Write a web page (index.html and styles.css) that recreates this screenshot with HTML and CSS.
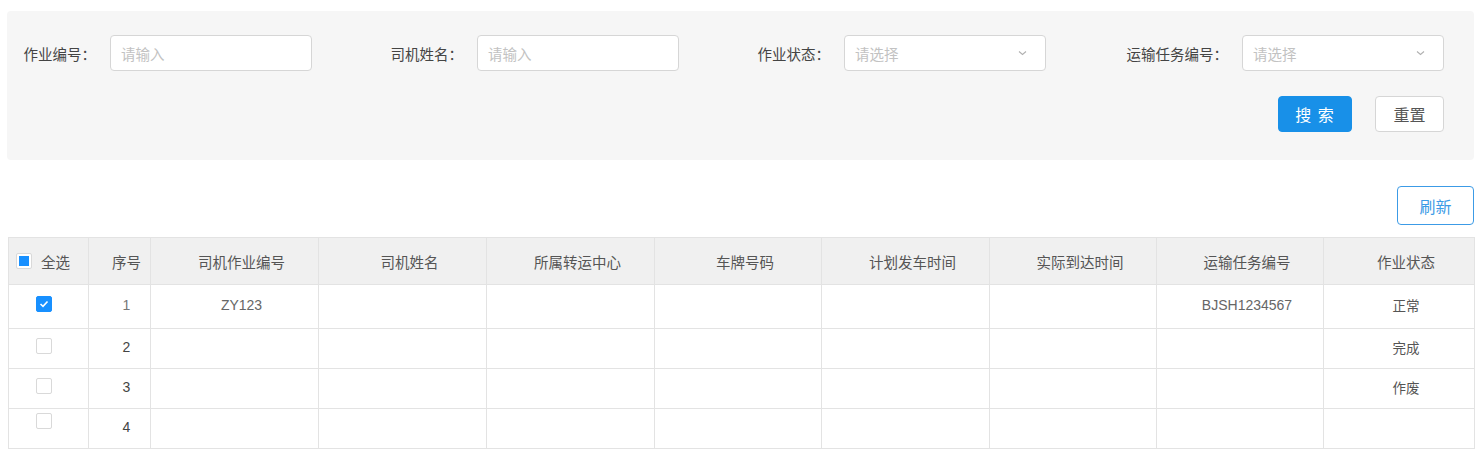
FILE: index.html
```html
<!DOCTYPE html>
<html lang="zh-CN">
<head>
<meta charset="utf-8">
<title>作业管理</title>
<link rel="stylesheet" href="styles.css">
</head>
<body>
<div class="page">
  <section class="filter">
    <div class="filter-grid">
      <div class="field"><span class="label">作业编号：</span><div class="input"><span class="ph">请输入</span></div></div>
      <div class="field"><span class="label">司机姓名：</span><div class="input"><span class="ph">请输入</span></div></div>
      <div class="field"><span class="label">作业状态：</span><div class="input select"><span class="ph">请选择</span><svg class="arrow" width="9" height="6" viewBox="0 0 9 6"><path d="M1 1.5 L4.5 4.5 L8 1.5" fill="none" stroke="#b0b0b0" stroke-width="1.1"/></svg></div></div>
      <div class="field"><span class="label">运输任务编号：</span><div class="input select"><span class="ph">请选择</span><svg class="arrow" width="9" height="6" viewBox="0 0 9 6"><path d="M1 1.5 L4.5 4.5 L8 1.5" fill="none" stroke="#b0b0b0" stroke-width="1.1"/></svg></div></div>
    </div>
    <div class="actions">
      <button class="btn primary">搜 索</button>
      <button class="btn plain">重置</button>
    </div>
  </section>

  <div class="toolbar">
    <button class="btn outline">刷新</button>
  </div>

  <table class="grid">
    <colgroup>
      <col class="c-check"><col class="c-no"><col class="c-w168"><col class="c-w168"><col class="c-w168"><col class="c-w167"><col class="c-w168"><col class="c-w167"><col class="c-w167"><col class="c-w151">
    </colgroup>
    <thead>
      <tr>
        <th class="th-check"><span class="cb cb-partial"></span><span class="all">全选</span></th>
        <th>序号</th>
        <th>司机作业编号</th>
        <th>司机姓名</th>
        <th>所属转运中心</th>
        <th>车牌号码</th>
        <th>计划发车时间</th>
        <th>实际到达时间</th>
        <th>运输任务编号</th>
        <th>作业状态</th>
      </tr>
    </thead>
    <tbody>
      <tr class="r1">
        <td class="td-check"><span class="cb cb-on"><svg width="10" height="8" viewBox="0 0 10 8"><path d="M1.5 4 L4 6.3 L8.5 1.5" fill="none" stroke="#fff" stroke-width="1.6"/></svg></span></td>
        <td class="num light">1</td>
        <td>ZY123</td>
        <td></td><td></td><td></td><td></td><td></td>
        <td>BJSH1234567</td>
        <td class="status">正常</td>
      </tr>
      <tr class="r2">
        <td class="td-check"><span class="cb"></span></td>
        <td class="num">2</td>
        <td></td><td></td><td></td><td></td><td></td><td></td><td></td>
        <td class="status">完成</td>
      </tr>
      <tr class="r3">
        <td class="td-check"><span class="cb"></span></td>
        <td class="num">3</td>
        <td></td><td></td><td></td><td></td><td></td><td></td><td></td>
        <td class="status">作废</td>
      </tr>
      <tr class="r4">
        <td class="td-check top"><span class="cb"></span></td>
        <td class="num">4</td>
        <td></td><td></td><td></td><td></td><td></td><td></td><td></td>
        <td class="status"></td>
      </tr>
    </tbody>
  </table>
</div>
</body>
</html>
```

FILE: styles.css
```css
* { box-sizing: border-box; }

html, body {
  margin: 0;
  padding: 0;
  background: #ffffff;
}

body {
  font-family: "Liberation Sans", "Noto Sans CJK SC", sans-serif;
  font-size: 14px;
  color: #333;
}

.page {
  padding: 11px 10px 0 7px;
}

/* ---------- filter panel ---------- */
.filter {
  background: #f6f6f6;
  border-radius: 4px;
  padding: 24px 30px 28px 16px;
}

.filter-grid {
  display: grid;
  grid-template-columns: 289px 367px 367px 398px;
}

.field {
  display: flex;
  align-items: center;
  justify-content: flex-end;
}

.label {
  color: #444;
  font-size: 14.5px;
  margin-right: 14px;
  white-space: nowrap;
}

.input {
  width: 202px;
  height: 36px;
  background: #fff;
  border: 1px solid #d6d6d6;
  border-radius: 4px;
  padding: 0 10px;
  display: flex;
  align-items: center;
  justify-content: space-between;
}

.ph {
  color: #c2c2c2;
  font-size: 14.5px;
}

.arrow {
  margin-right: 8px;
}

.actions {
  display: flex;
  justify-content: flex-end;
  gap: 23px;
  margin-top: 25px;
}

/* ---------- buttons ---------- */
.btn {
  height: 36px;
  border-radius: 4px;
  font-family: "Liberation Sans", "Noto Sans CJK SC", sans-serif;
  font-size: 16px;
  cursor: pointer;
  padding: 0;
}

.primary {
  width: 74px;
  background: #1890e8;
  border: 1px solid #1890e8;
  color: #fff;
  letter-spacing: 1px;
}

.plain {
  width: 69px;
  background: #fff;
  border: 1px solid #d6d6d6;
  color: #555;
}

.toolbar {
  display: flex;
  justify-content: flex-end;
  padding: 26px 0 12px;
}

.outline {
  width: 77px;
  height: 39px;
  background: #fff;
  border: 1px solid #3c9be6;
  color: #3c9be6;
}

/* ---------- table ---------- */
.grid {
  margin-left: 1px;
  width: 1466px;
  table-layout: fixed;
  border-collapse: collapse;
}

.c-check { width: 80px; }
.c-no { width: 62px; }
.c-w168 { width: 168px; }
.c-w167 { width: 167px; }
.c-w151 { width: 151px; }

.grid th,
.grid td {
  border: 1px solid #e3e3e3;
  text-align: center;
  padding: 0 0 0 14px;
  font-size: 14px;
  font-weight: normal;
}

.grid th {
  background: #f0f0f0;
  color: #555;
  height: 47px;
  font-size: 14.5px;
}

.grid td {
  color: #666;
  background: #fff;
}

.r1 td { height: 44px; padding-bottom: 3px; }
.r2 td, .r3 td, .r4 td { height: 40px; padding-bottom: 3px; }

.th-check {
  text-align: left !important;
  padding-left: 7px !important;
}

.th-check .cb {
  vertical-align: middle;
  margin-right: 9px;
}

.all {
  vertical-align: middle;
  color: #555;
}

.td-check {
  padding: 0 10px 0 0 !important;
  line-height: 0;
}

.td-check .cb {
  margin-top: -5px;
}

.td-check.top {
  vertical-align: top;
}

.td-check.top .cb {
  margin-top: 4px;
}

.cb {
  display: inline-flex;
  align-items: center;
  justify-content: center;
  width: 16px;
  height: 16px;
  border: 1px solid #d9d9d9;
  border-radius: 2px;
  background: #fff;
}

.cb-partial::after {
  content: "";
  width: 10px;
  height: 10px;
  background: #1890ff;
}

.cb-on {
  background: #1890ff;
  border-color: #1890ff;
}

.num { color: #444 !important; }
.num.light { color: #777 !important; }

.status {
  color: #555 !important;
  font-size: 13.5px !important;
}
```
